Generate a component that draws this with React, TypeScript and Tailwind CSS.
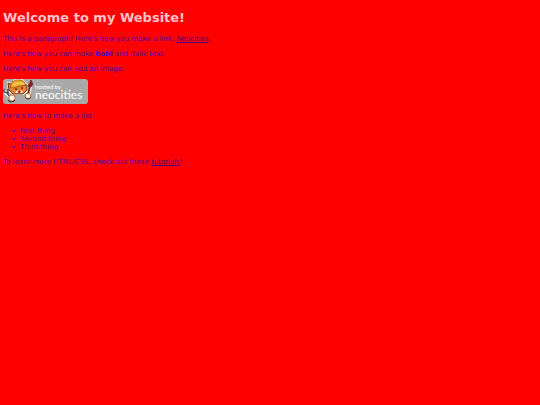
import React from 'react'

const LIST_ITEMS = ['First thing', 'Second thing', 'Third thing']

const App: React.FC = () => (
  <main className="min-h-screen bg-[#ff0000] px-[3px] pt-2 font-['DejaVu_Sans',sans-serif] text-[7px] leading-[8px] text-[#4800b8]">
    <h1 className="text-[13px] leading-[20px] font-bold text-[#ffc0cb] mb-[7px]">Welcome to my Website!</h1>

    <p className="mb-[7px]">
      This is a paragraph! Here's how you make a link:{' '}
      <a href="#neocities" className="text-[#4b0082] underline">Neocities</a>.
    </p>
    <p className="mb-[7px]">
      Here's how you can make <strong className="font-bold text-[#3000d0]">bold</strong> and <em className="italic">italic</em> text.
    </p>
    <p className="mb-[6px]">Here's how you can add an image:</p>

    <HostedBadge />

    <p className="mt-2 mb-[7px]">Here's how to make a list:</p>
    <ul className="pl-[10px] mb-[7px]">
      {LIST_ITEMS.map(item => (
        <li key={item} className="flex items-center gap-[5px] before:size-[2px] before:rounded-full before:bg-current">
          {item}
        </li>
      ))}
    </ul>

    <p>
      To learn more HTML/CSS, check out these{' '}
      <a href="#tutorials" className="text-[#4b0082] underline">tutorials</a>!
    </p>
  </main>
)

const HostedBadge: React.FC = () => (
  <div className="flex w-[85px] h-[25px] rounded-[3px] bg-[#a9a9a9] text-white">
    <Mascot />
    <div className="flex flex-col pt-1 pl-[2px] whitespace-nowrap font-['Lato',sans-serif]">
      <span className="text-[6px] leading-[7px]">hosted by</span>
      <span className="text-[12px] leading-[10px]">neocities</span>
    </div>
  </div>
)

/* cat in a yellow hat, wrench in one paw and brush in the other */
const Mascot: React.FC = () => (
  <svg viewBox="0 0 30 25" className="w-[30px] h-[25px] shrink-0" aria-hidden="true">
    <g stroke="#fff" strokeWidth="2" strokeLinejoin="round" fill="#fff">
      <path d="M5 4 L9 4 L12 1 L19 1 L22 4 L24 6 L24 12 L20 15 L10 15 L6 12 Z" />
      <path d="M1 12 L8 19 M28 3 L26 16" strokeWidth="3" />
    </g>
    <path d="M5 4 L8 5 L21 6 L24 6 L24 11 L20 15 L10 15 L6 11 Z" fill="#e8842f" stroke="#6a3020" strokeWidth="1" />
    <path d="M7 8 L9 3 Q12 0 18 1 Q22 2 23 6 L17 7 L10 9 Z" fill="#efae2b" stroke="#94541a" strokeWidth="0.8" />
    <path d="M10 6 Q15 3 21 5" fill="none" stroke="#ffdd70" strokeWidth="1" />
    <path d="M12 13 Q14 11 16 12 Q19 11 20 13 L18 14 L13 14 Z" fill="#fff0dc" />
    <path d="M13 9 V11 M19 8 V10" stroke="#27191c" strokeWidth="1.2" />
    <path d="M15 12 H18 L17 14 H15 Z" fill="#b5201d" />
    <path d="M1 10 L1 13 L5 14 L5 10 M4 14 L8 19" fill="none" stroke="#494650" strokeWidth="1.4" />
    <path d="M27 6 L25 16" fill="none" stroke="#6d3325" strokeWidth="2" />
    <path d="M28 1 L30 5 L28 8 L25 7 Z" fill="#a71422" stroke="#54202a" strokeWidth="0.7" />
    <circle cx="9" cy="19" r="3.2" fill="#fff4e4" stroke="#b8682c" strokeWidth="1" />
    <path d="M5 21 Q8 25 12 21" fill="none" stroke="#4d2b24" strokeWidth="1.1" />
    <circle cx="25" cy="17" r="2.8" fill="#fff4e4" stroke="#b8682c" strokeWidth="1" />
    <path d="M22 18 Q25 22 28 18" fill="none" stroke="#4d2b24" strokeWidth="1" />
  </svg>
)

export default App
